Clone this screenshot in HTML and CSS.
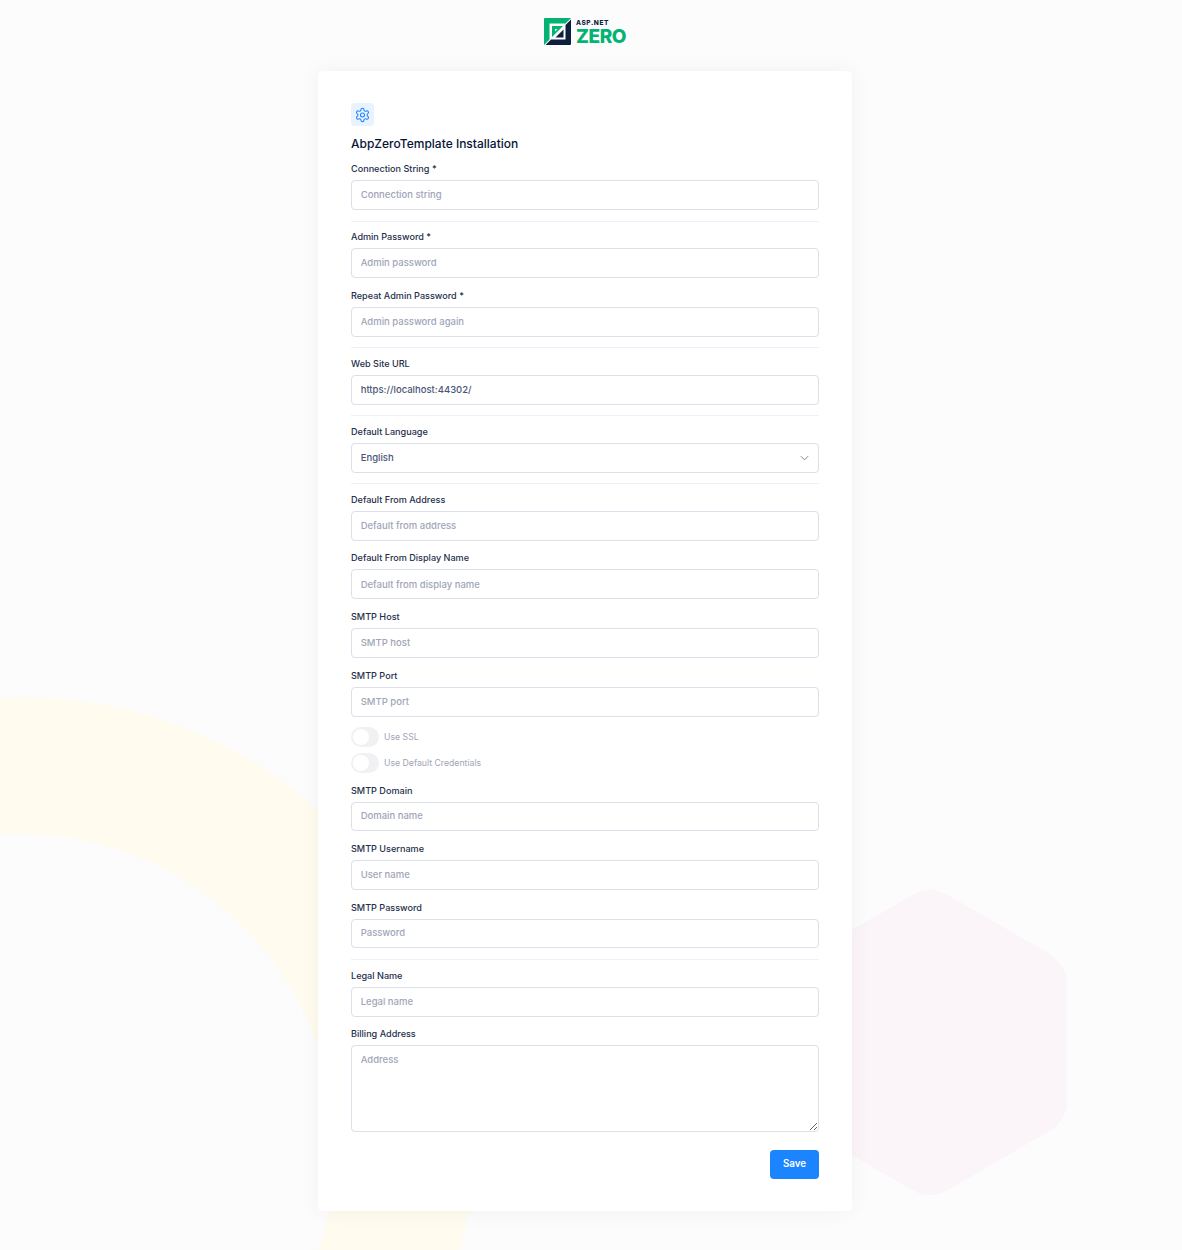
FILE: index.html
```html
<!DOCTYPE html>
<html lang="en">
<head>
<meta charset="utf-8">
<title>AbpZeroTemplate Installation</title>
<link rel="stylesheet" href="styles.css">
</head>
<body>
<svg class="backdrop" viewBox="0 0 1182 1250" width="1182" height="1250" aria-hidden="true">
  <circle class="arc" cx="20" cy="1149" r="383.500"/>
  <path class="hex" d="M912 895Q930 884.600 948 895L1048 953Q1067 964 1067 985L1067 1100Q1067 1121 1048 1132L948 1190Q930 1200.400 912 1190L812 1132Q793 1121 793 1100L793 985Q793 964 812 953Z"/>
</svg>
<div class="page">
  <header class="brand">
    <svg class="brand-mark" viewBox="0 0 27 27" width="27" height="27" aria-hidden="true">
      <path class="mark-green" d="M0 1Q0 0 1 0H27L21.500 5.500H5.500V21.500L0 27Z"/>
      <path class="mark-dark" d="M27 1.500V26Q27 27 26 27H1.500L7 21.500H21.500V7Z"/>
      <path class="mark-green" fill-rule="evenodd" d="M8 8H19L8 19ZM11 11V13.500L13.500 11Z"/>
      <path class="mark-dark" d="M19.500 11.500V19.500H11.500Z"/>
    </svg>
    <div class="brand-text">
      <span class="brand-asp">ASP.NET</span>
      <span class="brand-zero">ZERO</span>
    </div>
  </header>
  <main class="card">
    <div class="icon-box">
      <svg viewBox="0 0 24 24" width="16" height="16" fill="none" stroke="currentColor" stroke-width="1.600" stroke-linecap="round" stroke-linejoin="round" aria-hidden="true">
        <path d="M12.220 2h-.44a2 2 0 0 0-2 2v.18a2 2 0 0 1-1 1.730l-.43.25a2 2 0 0 1-2 0l-.15-.08a2 2 0 0 0-2.730.73l-.22.38a2 2 0 0 0 .73 2.730l.15.1a2 2 0 0 1 1 1.720v.51a2 2 0 0 1-1 1.740l-.15.09a2 2 0 0 0-.73 2.730l.22.38a2 2 0 0 0 2.730.73l.15-.08a2 2 0 0 1 2 0l.43.25a2 2 0 0 1 1 1.730V20a2 2 0 0 0 2 2h.44a2 2 0 0 0 2-2v-.18a2 2 0 0 1 1-1.730l.43-.25a2 2 0 0 1 2 0l.15.08a2 2 0 0 0 2.730-.73l.22-.39a2 2 0 0 0-.73-2.730l-.15-.08a2 2 0 0 1-1-1.740v-.5a2 2 0 0 1 1-1.740l.15-.09a2 2 0 0 0 .73-2.730l-.22-.38a2 2 0 0 0-2.730-.73l-.15.08a2 2 0 0 1-2 0l-.43-.25a2 2 0 0 1-1-1.730V4a2 2 0 0 0-2-2z"/>
        <circle cx="12" cy="12" r="3"/>
      </svg>
    </div>
    <h1 class="title">AbpZeroTemplate Installation</h1>
    <form class="form">
      <div class="group"><label class="label">Connection String *</label><input class="control" placeholder="Connection string"></div>
      <hr class="rule">
      <div class="group"><label class="label">Admin Password *</label><input class="control" type="password" placeholder="Admin password"></div>
      <div class="group"><label class="label">Repeat Admin Password *</label><input class="control" type="password" placeholder="Admin password again"></div>
      <hr class="rule">
      <div class="group"><label class="label">Web Site URL</label><input class="control" value="https://localhost:44302/"></div>
      <hr class="rule">
      <div class="group">
        <label class="label">Default Language</label>
        <div class="select-wrap">
          <select class="control select"><option>English</option></select>
          <svg class="chevron" viewBox="0 0 10 6" width="9" height="6" aria-hidden="true"><path d="M1 1l4 4 4-4"/></svg>
        </div>
      </div>
      <hr class="rule">
      <div class="group"><label class="label">Default From Address</label><input class="control" placeholder="Default from address"></div>
      <div class="group"><label class="label">Default From Display Name</label><input class="control" placeholder="Default from display name"></div>
      <div class="group"><label class="label">SMTP Host</label><input class="control" placeholder="SMTP host"></div>
      <div class="group group-tight"><label class="label">SMTP Port</label><input class="control" placeholder="SMTP port"></div>
      <div class="toggles">
        <label class="toggle"><input class="switch" type="checkbox" disabled><span>Use SSL</span></label>
        <label class="toggle"><input class="switch" type="checkbox" disabled><span>Use Default Credentials</span></label>
      </div>
      <div class="group group-short group-domain"><label class="label">SMTP Domain</label><input class="control" placeholder="Domain name"></div>
      <div class="group"><label class="label">SMTP Username</label><input class="control" placeholder="User name"></div>
      <div class="group group-short"><label class="label">SMTP Password</label><input class="control" type="password" placeholder="Password"></div>
      <hr class="rule">
      <div class="group group-legal"><label class="label">Legal Name</label><input class="control" placeholder="Legal name"></div>
      <div class="group group-last"><label class="label">Billing Address</label><textarea class="control area" placeholder="Address"></textarea></div>
      <div class="actions"><button class="save" type="button">Save</button></div>
    </form>
  </main>
</div>
</body>
</html>
```
FILE: styles.css
```css
* { box-sizing: border-box; }
html, body { margin: 0; height: 1250px; overflow: hidden; }
body {
  background: #fcfcfc;
  font-family: Inter, "Liberation Sans", sans-serif;
  position: relative;
  color: #252f4a;
}
.backdrop { position: absolute; top: 0; left: 0; }
.arc { fill: none; stroke: #fffbee; stroke-width: 137px; }
.hex { fill: #fbf5f9; }
.page {
  position: relative;
  display: flex;
  flex-direction: column;
  align-items: center;
  padding: 18px 12px 0 0;
}
.brand { display: flex; align-items: flex-start; gap: 5px; height: 53px; width: 82px; }
.brand-mark { display: block; flex: none; }
.mark-green { fill: #04b273; }
.mark-dark { fill: #0c1f3f; }
.brand-text { display: flex; flex-direction: column; width: 50px; }
.brand-asp { font-size: 6.500px; line-height: 7px; font-weight: 800; color: #0c1f3f; margin-top: 2px; letter-spacing: .6px; white-space: nowrap; }
.brand-zero { font-size: 19px; line-height: 15px; font-weight: 800; color: #04b273; letter-spacing: -.4px; margin-top: 2px; white-space: nowrap; }
.card {
  width: 534px;
  height: 1140px;
  background: #fff;
  border-radius: 5px;
  padding: 32px 33px;
  box-shadow: 0 0 20px rgba(60, 60, 70, .06);
}
.icon-box {
  width: 23px;
  height: 23px;
  border-radius: 4px;
  background: #e9f3ff;
  color: #1b84ff;
  display: flex;
  align-items: center;
  justify-content: center;
  margin-bottom: 10px;
}
.icon-box svg { display: block; transform: translateX(-.5px); }
.title { margin: 0 0 10px; font-size: 12px; line-height: 16px; font-weight: 500; color: #071437; }
.group { padding-top: 1px; margin-bottom: 10.700px; }
.group-tight { margin-bottom: 9.900px; }
.group-legal { margin-bottom: 10.100px; }
.group-last { margin-bottom: 18px; }
.group-short { margin-bottom: 11.300px; }
.group-short .control { height: 29.400px; }
.group-domain .control { height: 29px; }
.label { display: block; font-size: 9.100px; line-height: 12px; font-weight: 500; color: #252f4a; margin-bottom: 5px; }
.control {
  display: block;
  width: 100%;
  height: 30px;
  padding: 0 8.700px .6px;
  border: 1px solid #dbdfe9;
  border-radius: 4px;
  background: #fff;
  font-family: inherit;
  font-size: 9.500px;
  font-weight: 500;
  color: #4b5675;
  outline: none;
}
.control::placeholder { color: #a1a5b7; opacity: 1; }
.rule { border: 0; border-top: 1px solid #f1f1f4; margin: 0 0 8.300px; }
.select-wrap { position: relative; }
.select { appearance: none; -webkit-appearance: none; padding-left: 8.700px; }
.chevron { position: absolute; right: 10px; top: 12px; fill: none; stroke: #78829d; stroke-width: 1.100; }
.toggles { display: flex; flex-direction: column; gap: 6px; margin-bottom: 11px; }
.toggle { display: flex; align-items: center; gap: 5px; height: 20px; font-size: 8.700px; font-weight: 400; color: #a1a5b7; }
.switch {
  appearance: none;
  -webkit-appearance: none;
  position: relative;
  margin: 0;
  width: 28px;
  height: 20px;
  border-radius: 10px;
  background: #f1f1f4;
}
.switch::after {
  content: "";
  position: absolute;
  left: 2px;
  top: 2px;
  width: 16px;
  height: 16px;
  border-radius: 50%;
  background: #fff;
}
.area { height: 87px; padding-top: 8px; resize: vertical; }
.actions { display: flex; justify-content: flex-end; }
.save {
  width: 49px;
  height: 29px;
  border: 0;
  border-radius: 4px;
  background: #1b84ff;
  color: #fff;
  font-family: inherit;
  font-size: 9.750px;
  font-weight: 600;
  padding: 0 0 2px;
}
```
